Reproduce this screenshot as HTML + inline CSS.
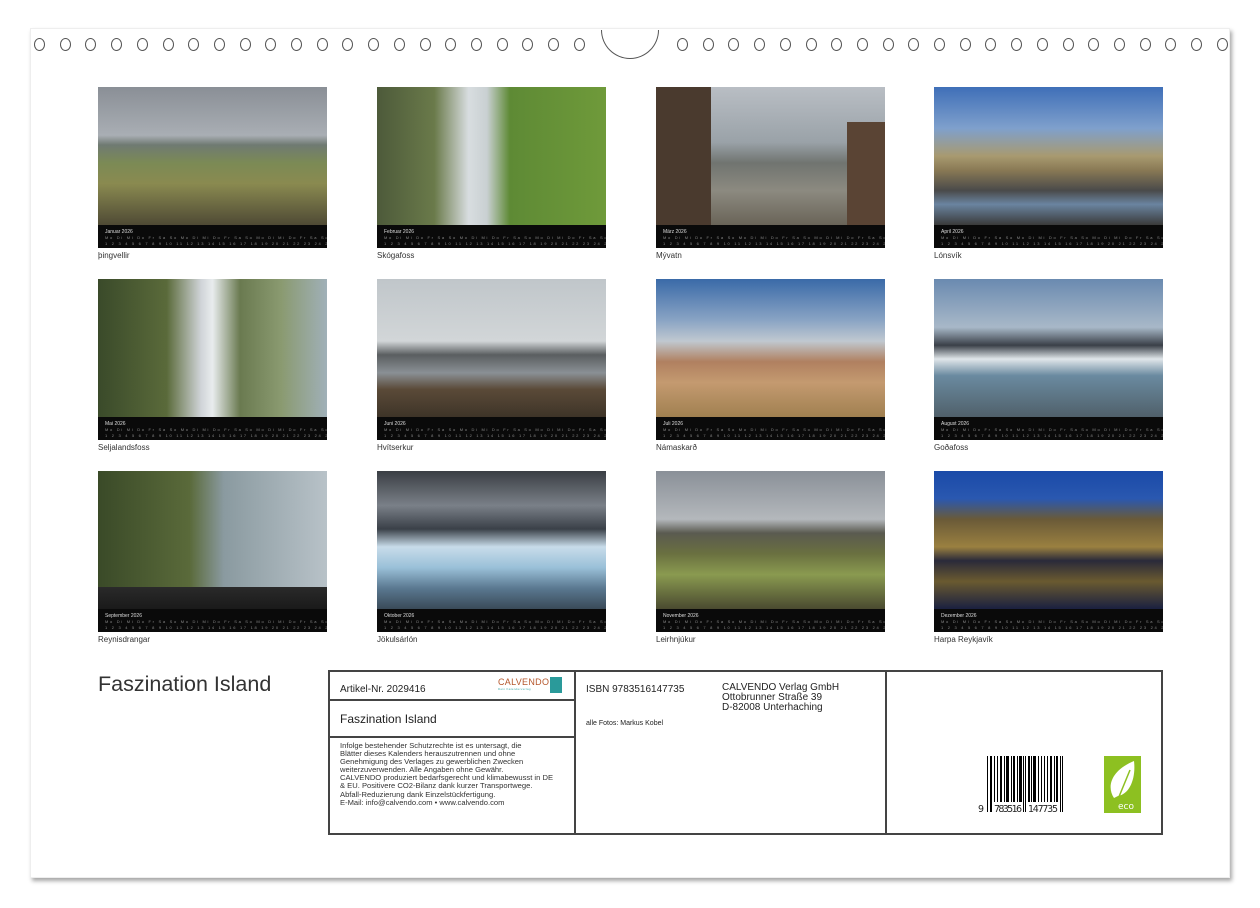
<!DOCTYPE html>
<html><head><meta charset="utf-8"><style>
*{margin:0;padding:0;box-sizing:border-box}
body{width:1260px;height:908px;background:#fff;position:relative;overflow:hidden;font-family:"Liberation Sans",sans-serif;color:#222}
.page{position:absolute;left:30px;top:28px;width:1200px;height:850px;background:#fff;box-shadow:2px 3px 4px rgba(0,0,0,.35);border:1px solid #eee}
.holes{position:absolute;top:38px;left:0;width:1260px;height:14px}
.h{position:absolute;width:11px;height:13px;border:1.3px solid #555;border-radius:50%}
.half{position:absolute;left:601px;top:30px;width:58px;height:29px;border:1.3px solid #555;border-top:none;border-radius:0 0 29px 29px}
.ph{position:absolute;width:229px;height:138px}
.st{position:absolute;width:229px;height:23px;background:#0a0a0a;color:#ddd;font-size:5px;padding:4px 0 0 7px;line-height:6px;white-space:nowrap;overflow:hidden}
.st i{display:block;font-style:normal;color:#888;font-size:4px;letter-spacing:1.7px}
.cap{position:absolute;font-size:8px;color:#333}
.box{position:absolute;left:328px;top:670px;width:835px;height:165px;border:2px solid #444}
.v{position:absolute;top:0;bottom:0;border-left:2px solid #444}
.hl{position:absolute;left:0;width:246px;border-top:2px solid #444}
.t{position:absolute;font-size:10px;line-height:10px}
</style></head><body>
<div class="page"></div>
<div class="half"></div>
<div class="holes">
<div class="h" style="left:34px"></div><div class="h" style="left:59.7px"></div><div class="h" style="left:85.4px"></div><div class="h" style="left:111px"></div><div class="h" style="left:136.8px"></div><div class="h" style="left:162.5px"></div><div class="h" style="left:188.2px"></div><div class="h" style="left:214px"></div><div class="h" style="left:239.6px"></div><div class="h" style="left:265.3px"></div><div class="h" style="left:291px"></div><div class="h" style="left:316.7px"></div><div class="h" style="left:342.4px"></div><div class="h" style="left:368px"></div><div class="h" style="left:393.8px"></div><div class="h" style="left:419.5px"></div><div class="h" style="left:445.2px"></div><div class="h" style="left:471px"></div><div class="h" style="left:496.6px"></div><div class="h" style="left:522.3px"></div><div class="h" style="left:548px"></div><div class="h" style="left:573.7px"></div>
<div class="h" style="left:677px"></div><div class="h" style="left:702.7px"></div><div class="h" style="left:728.4px"></div><div class="h" style="left:754px"></div><div class="h" style="left:779.8px"></div><div class="h" style="left:805.5px"></div><div class="h" style="left:831.2px"></div><div class="h" style="left:857px"></div><div class="h" style="left:882.6px"></div><div class="h" style="left:908.3px"></div><div class="h" style="left:934px"></div><div class="h" style="left:959.7px"></div><div class="h" style="left:985.4px"></div><div class="h" style="left:1011px"></div><div class="h" style="left:1036.8px"></div><div class="h" style="left:1062.5px"></div><div class="h" style="left:1088.2px"></div><div class="h" style="left:1114px"></div><div class="h" style="left:1139.6px"></div><div class="h" style="left:1165.3px"></div><div class="h" style="left:1191px"></div><div class="h" style="left:1216.7px"></div>
</div>

<div class="ph" style="left:98px;top:87px;background:linear-gradient(180deg,#8a8f96 0%,#a9aeb4 35%,#6f7a72 42%,#7b8a55 55%,#8a8a50 70%,#4f4a35 100%)"></div>
<div class="ph" style="left:377px;top:87px;background:linear-gradient(90deg,#4d5a3a 0%,#6a7a4a 25%,#d8dde0 40%,#c9d0d2 48%,#5e8a35 58%,#6f9a3a 100%);"></div>
<div class="ph" style="left:656px;top:87px;background:linear-gradient(180deg,#b9bec4 0%,#9aa2a8 40%,#707470 55%,#8c8a80 75%,#6a6458 100%)"><div style="position:absolute;left:0;top:0;width:55px;height:138px;background:#4a3a2e"></div><div style="position:absolute;right:0;top:35px;width:38px;height:103px;background:#5a4434"></div></div>
<div class="ph" style="left:934px;top:87px;background:linear-gradient(180deg,#3f6fb8 0%,#7fa0cc 30%,#a89a70 50%,#8a7a55 60%,#4a4a4a 75%,#6a84a0 85%,#3a3a3a 100%)"></div>
<div class="ph" style="left:98px;top:279px;background:linear-gradient(90deg,#3a4a2a 0%,#5a6a3a 30%,#d0d4d8 45%,#e8ecee 50%,#6a7a50 62%,#8a9a70 80%,#a0b0b8 100%)"></div>
<div class="ph" style="left:377px;top:279px;background:linear-gradient(180deg,#c0c6ca 0%,#d2d6d8 45%,#5a5e60 55%,#8a9095 68%,#5a4a38 80%,#3e3428 100%)"></div>
<div class="ph" style="left:656px;top:279px;background:linear-gradient(180deg,#3a6aa8 0%,#8aa4c4 30%,#c0c8d0 45%,#b08060 60%,#c49a70 75%,#a08050 100%)"></div>
<div class="ph" style="left:934px;top:279px;background:linear-gradient(180deg,#6a8ab0 0%,#a8b8c8 35%,#3a4048 48%,#e0e6ea 58%,#6a8aa0 70%,#50606a 100%)"></div>
<div class="ph" style="left:98px;top:471px;background:linear-gradient(90deg,#3a4a28 0%,#5a6a3a 40%,#8a9aa0 55%,#b8c2c8 100%)"><div style="position:absolute;left:0;bottom:0;width:229px;height:22px;background:linear-gradient(180deg,#2a2a2a,#1a1a1a)"></div></div>
<div class="ph" style="left:377px;top:471px;background:linear-gradient(180deg,#3a3e44 0%,#7a8088 25%,#3a4048 42%,#c8dcea 55%,#9ac0d8 70%,#5a7890 85%,#3a4a58 100%)"></div>
<div class="ph" style="left:656px;top:471px;background:linear-gradient(180deg,#8a9098 0%,#b4b8bc 35%,#5a5a50 45%,#6a7040 60%,#8a9a50 75%,#4a4a30 100%)"></div>
<div class="ph" style="left:934px;top:471px;background:linear-gradient(180deg,#1a4aa8 0%,#2a58b0 20%,#6a5a38 35%,#9a8040 55%,#2a2a3a 65%,#6a5a30 80%,#1a2040 100%)"></div>

<div class="st" style="left:98px;top:225px">Januar 2026<i>Mo Di Mi Do Fr Sa So Mo Di Mi Do Fr Sa So Mo Di Mi Do Fr Sa So Mo Di Mi Do Fr Sa So Mo Di Mi</i><i>1 2 3 4 5 6 7 8 9 10 11 12 13 14 15 16 17 18 19 20 21 22 23 24 25 26 27 28 29 30 31</i></div>
<div class="st" style="left:377px;top:225px">Februar 2026<i>Mo Di Mi Do Fr Sa So Mo Di Mi Do Fr Sa So Mo Di Mi Do Fr Sa So Mo Di Mi Do Fr Sa So</i><i>1 2 3 4 5 6 7 8 9 10 11 12 13 14 15 16 17 18 19 20 21 22 23 24 25 26 27 28</i></div>
<div class="st" style="left:656px;top:225px">März 2026<i>Mo Di Mi Do Fr Sa So Mo Di Mi Do Fr Sa So Mo Di Mi Do Fr Sa So Mo Di Mi Do Fr Sa So Mo Di Mi</i><i>1 2 3 4 5 6 7 8 9 10 11 12 13 14 15 16 17 18 19 20 21 22 23 24 25 26 27 28 29 30 31</i></div>
<div class="st" style="left:934px;top:225px">April 2026<i>Mo Di Mi Do Fr Sa So Mo Di Mi Do Fr Sa So Mo Di Mi Do Fr Sa So Mo Di Mi Do Fr Sa So Mo Di</i><i>1 2 3 4 5 6 7 8 9 10 11 12 13 14 15 16 17 18 19 20 21 22 23 24 25 26 27 28 29 30</i></div>
<div class="st" style="left:98px;top:417px">Mai 2026<i>Mo Di Mi Do Fr Sa So Mo Di Mi Do Fr Sa So Mo Di Mi Do Fr Sa So Mo Di Mi Do Fr Sa So Mo Di Mi</i><i>1 2 3 4 5 6 7 8 9 10 11 12 13 14 15 16 17 18 19 20 21 22 23 24 25 26 27 28 29 30 31</i></div>
<div class="st" style="left:377px;top:417px">Juni 2026<i>Mo Di Mi Do Fr Sa So Mo Di Mi Do Fr Sa So Mo Di Mi Do Fr Sa So Mo Di Mi Do Fr Sa So Mo Di</i><i>1 2 3 4 5 6 7 8 9 10 11 12 13 14 15 16 17 18 19 20 21 22 23 24 25 26 27 28 29 30</i></div>
<div class="st" style="left:656px;top:417px">Juli 2026<i>Mo Di Mi Do Fr Sa So Mo Di Mi Do Fr Sa So Mo Di Mi Do Fr Sa So Mo Di Mi Do Fr Sa So Mo Di Mi</i><i>1 2 3 4 5 6 7 8 9 10 11 12 13 14 15 16 17 18 19 20 21 22 23 24 25 26 27 28 29 30 31</i></div>
<div class="st" style="left:934px;top:417px">August 2026<i>Mo Di Mi Do Fr Sa So Mo Di Mi Do Fr Sa So Mo Di Mi Do Fr Sa So Mo Di Mi Do Fr Sa So Mo Di Mi</i><i>1 2 3 4 5 6 7 8 9 10 11 12 13 14 15 16 17 18 19 20 21 22 23 24 25 26 27 28 29 30 31</i></div>
<div class="st" style="left:98px;top:609px">September 2026<i>Mo Di Mi Do Fr Sa So Mo Di Mi Do Fr Sa So Mo Di Mi Do Fr Sa So Mo Di Mi Do Fr Sa So Mo Di</i><i>1 2 3 4 5 6 7 8 9 10 11 12 13 14 15 16 17 18 19 20 21 22 23 24 25 26 27 28 29 30</i></div>
<div class="st" style="left:377px;top:609px">Oktober 2026<i>Mo Di Mi Do Fr Sa So Mo Di Mi Do Fr Sa So Mo Di Mi Do Fr Sa So Mo Di Mi Do Fr Sa So Mo Di Mi</i><i>1 2 3 4 5 6 7 8 9 10 11 12 13 14 15 16 17 18 19 20 21 22 23 24 25 26 27 28 29 30 31</i></div>
<div class="st" style="left:656px;top:609px">November 2026<i>Mo Di Mi Do Fr Sa So Mo Di Mi Do Fr Sa So Mo Di Mi Do Fr Sa So Mo Di Mi Do Fr Sa So Mo Di</i><i>1 2 3 4 5 6 7 8 9 10 11 12 13 14 15 16 17 18 19 20 21 22 23 24 25 26 27 28 29 30</i></div>
<div class="st" style="left:934px;top:609px">Dezember 2026<i>Mo Di Mi Do Fr Sa So Mo Di Mi Do Fr Sa So Mo Di Mi Do Fr Sa So Mo Di Mi Do Fr Sa So Mo Di Mi</i><i>1 2 3 4 5 6 7 8 9 10 11 12 13 14 15 16 17 18 19 20 21 22 23 24 25 26 27 28 29 30 31</i></div>

<div class="cap" style="left:98px;top:251px">þingvellir</div>
<div class="cap" style="left:377px;top:251px">Skógafoss</div>
<div class="cap" style="left:656px;top:251px">Mývatn</div>
<div class="cap" style="left:934px;top:251px">Lónsvík</div>
<div class="cap" style="left:98px;top:443px">Seljalandsfoss</div>
<div class="cap" style="left:377px;top:443px">Hvítserkur</div>
<div class="cap" style="left:656px;top:443px">Námaskarð</div>
<div class="cap" style="left:934px;top:443px">Goðafoss</div>
<div class="cap" style="left:98px;top:635px">Reynisdrangar</div>
<div class="cap" style="left:377px;top:635px">Jökulsárlón</div>
<div class="cap" style="left:656px;top:635px">Leirhnjúkur</div>
<div class="cap" style="left:934px;top:635px">Harpa Reykjavík</div>

<div style="position:absolute;left:98px;top:672px;font-size:21.5px;color:#333">Faszination Island</div>

<div class="box">
 <div class="v" style="left:244px"></div>
 <div class="v" style="left:555px"></div>
 <div class="hl" style="top:27px"></div>
 <div class="hl" style="top:64px"></div>
 <div class="t" style="left:10px;top:13px">Artikel-Nr. 2029416</div>
 <div style="position:absolute;left:168px;top:5px;font-size:9px;color:#b5562b;letter-spacing:.3px">CALVENDO<div style="font-size:3px;color:#4aa">Dein Kalenderverlag</div></div>
 <div style="position:absolute;left:220px;top:5px;width:12px;height:16px;background:#2a9a9a"></div>
 <div class="t" style="left:10px;top:41px;font-size:12px;line-height:12px">Faszination Island</div>
 <div style="position:absolute;left:10px;top:70px;font-size:7.6px;line-height:8.1px;color:#333;width:230px">Infolge bestehender Schutzrechte ist es untersagt, die<br>Blätter dieses Kalenders herauszutrennen und ohne<br>Genehmigung des Verlages zu gewerblichen Zwecken<br>weiterzuverwenden. Alle Angaben ohne Gewähr.<br>CALVENDO produziert bedarfsgerecht und klimabewusst in DE<br>&amp; EU. Positivere CO2-Bilanz dank kurzer Transportwege.<br>Abfall-Reduzierung dank Einzelstückfertigung.<br>E-Mail: info@calvendo.com • www.calvendo.com</div>
 <div class="t" style="left:256px;top:13px">ISBN 9783516147735</div>
 <div class="t" style="left:392px;top:11px;line-height:10px">CALVENDO Verlag GmbH<br>Ottobrunner Straße 39<br>D-82008 Unterhaching</div>
 <div style="position:absolute;left:256px;top:48px;font-size:7px">alle Fotos: Markus Kobel</div>
 <svg style="position:absolute;left:645px;top:82px" width="100" height="62">
  <g fill="#000">
   <rect x="12" y="2" width="1" height="56"/><rect x="15" y="2" width="2" height="56"/>
   <rect x="19" y="2" width="1" height="46"/><rect x="22" y="2" width="1" height="46"/><rect x="25" y="2" width="2" height="46"/><rect x="29" y="2" width="1" height="46"/><rect x="31" y="2" width="3" height="46"/><rect x="36" y="2" width="1" height="46"/><rect x="38" y="2" width="2" height="46"/><rect x="42" y="2" width="1" height="46"/><rect x="44" y="2" width="3" height="46"/>
   <rect x="48" y="2" width="1" height="56"/><rect x="50" y="2" width="1" height="56"/>
   <rect x="53" y="2" width="2" height="46"/><rect x="56" y="2" width="1" height="46"/><rect x="58" y="2" width="3" height="46"/><rect x="63" y="2" width="1" height="46"/><rect x="66" y="2" width="1" height="46"/><rect x="69" y="2" width="1" height="46"/><rect x="72" y="2" width="1" height="46"/><rect x="75" y="2" width="2" height="46"/><rect x="79" y="2" width="1" height="46"/><rect x="81" y="2" width="2" height="46"/>
   <rect x="85" y="2" width="1" height="56"/><rect x="87" y="2" width="1" height="56"/>
  </g>
  <text x="3" y="58" font-size="9.5" font-family="DejaVu Sans" fill="#222">9</text>
  <text x="19" y="58" font-size="9.5" font-family="DejaVu Sans" fill="#222" textLength="28">783516</text>
  <text x="53" y="58" font-size="9.5" font-family="DejaVu Sans" fill="#222" textLength="30">147735</text>
 </svg>
 <svg style="position:absolute;left:774px;top:84px" width="37" height="57">
  <rect width="37" height="57" fill="#8dc021"/>
  <path d="M10 42 C2 30 8 14 30 5 C32 22 26 38 14 40 Z" fill="#fff"/>
  <path d="M12 48 L26 14" stroke="#8dc021" stroke-width="1.5"/>
  <text x="14" y="53" font-size="9" fill="#fff" font-family="DejaVu Sans">eco</text>
 </svg>
</div>
</body></html>
